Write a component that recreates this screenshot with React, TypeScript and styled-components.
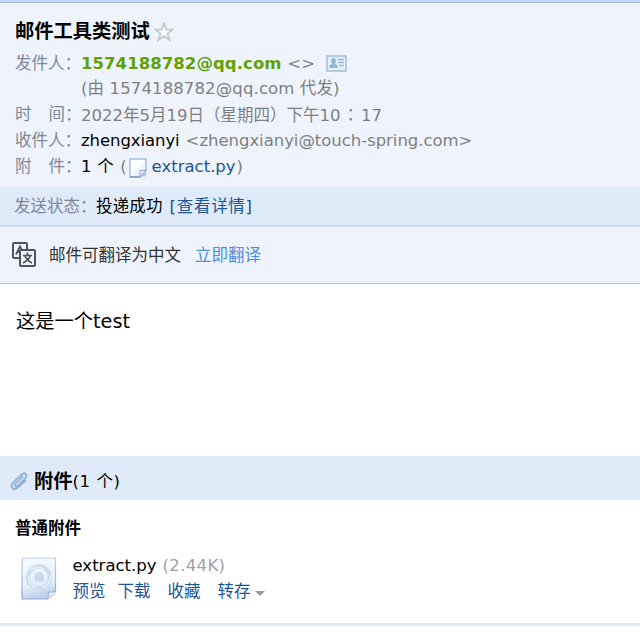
import { createGlobalStyle, styled } from "styled-components";

const actions = [
  { label: "预览", gap: 12 },
  { label: "下载", gap: 17 },
  { label: "收藏", gap: 17 },
];

export default function App() {
  return (
    <>
      <GlobalStyle />
      <Page>
        <TopEdge />
        <MailHeader>
          <TitleRow>
            <Title>邮件工具类测试</Title>
            <StarIcon />
          </TitleRow>
          <Row>
            <Label>发件人：</Label>
            <Sender>1574188782@qq.com</Sender>
            <Muted $left={6}>&lt;&gt;</Muted>
            <CardIcon />
          </Row>
          <Row $height={24}>
            <Label />
            <Muted $spacing={0.12}>(由 1574188782@qq.com 代发)</Muted>
          </Row>
          <Row $height={28}>
            <Label>
              时<Wide />间：
            </Label>
            <Muted>
              2022年5月19日（星期四）下午10<Colon>：</Colon>17
            </Muted>
          </Row>
          <Row $height={24}>
            <Label>收件人：</Label>
            <Text $spacing={-0.08}>zhengxianyi</Text>
            <Muted $left={6} $spacing={-0.04}>
              &lt;zhengxianyi@touch-spring.com&gt;
            </Muted>
          </Row>
          <Row $height={28}>
            <Label>
              附<Wide />件：
            </Label>
            <Text $spacing={0.3}>1 个</Text>
            <Muted $left={6}>(</Muted>
            <NoteIcon />
            <Link>extract.py</Link>
            <Muted $left={1}>)</Muted>
          </Row>
        </MailHeader>
        <StatusBar>
          <Label $width={82}>发送状态：</Label>
          <Text $spacing={0.15}>投递成功</Text>
          <DetailLink>[查看详情]</DetailLink>
        </StatusBar>
        <TranslateBar>
          <TranslateIcon />
          <Text $color="#333">邮件可翻译为中文</Text>
          <TranslateLink>立即翻译</TranslateLink>
        </TranslateBar>
        <MailBody>这是一个test</MailBody>
        <AttachmentBar>
          <ClipIcon />
          <Title>附件</Title>
          <Text $spacing={0.6}>(1 个)</Text>
        </AttachmentBar>
        <AttachmentPanel>
          <GroupName>普通附件</GroupName>
          <FileItem>
            <FileIcon />
            <FileInfo>
              <FileLine>
                <Text>extract.py</Text>
                <FileSize>(2.44K)</FileSize>
              </FileLine>
              <FileLine>
                {actions.map(({ label, gap }) => (
                  <Action key={label} $gap={gap}>
                    {label}
                  </Action>
                ))}
                <Action $gap={4}>转存</Action>
                <Caret />
              </FileLine>
            </FileInfo>
          </FileItem>
        </AttachmentPanel>
      </Page>
    </>
  );
}

function StarIcon() {
  return (
    <svg width="20" height="20" viewBox="0 0 20 20">
      <path
        d="M10 1.2 12.2 7.6H18.8L13.5 11.5 15.5 18 10 14.1 4.5 18 6.5 11.5 1.2 7.6H7.8Z"
        fill="#fbfcfd"
        stroke="#c6c8ca"
        strokeWidth="1.7"
      />
    </svg>
  );
}

function CardIcon() {
  return (
    <CardSvg width="21" height="17" viewBox="0 0 21 17">
      <rect x="1" y="1" width="19" height="15" fill="#e5f0fa" stroke="#a6c1da" strokeWidth="1.6" />
      <path
        d="M7.5 3C9.2 3 9.8 4 9.8 5.5S9 8.2 9 9l2.5 1.2V13h-8v-2.8L6 9c0-.8-.9-2-.9-3.5S5.8 3 7.5 3Z"
        fill="#94b5d3"
      />
      <path d="M12 4.5h6M12 7.5h6M13 10.5h5" stroke="#9cbbd7" strokeWidth="1.3" />
    </CardSvg>
  );
}

function NoteIcon() {
  return (
    <NoteSvg width="18" height="20" viewBox="0 0 18 20">
      <defs>
        <linearGradient id="note" x1="0" y1="0" x2="1" y2="1">
          <stop offset="0.4" stopColor="#fff" />
          <stop offset="1" stopColor="#cbdcf2" />
        </linearGradient>
      </defs>
      <path d="M1 1H17V12L11 19H1Z" fill="url(#note)" stroke="#a9bedd" strokeWidth="1.5" />
      <path d="M1 19H11L17 12" fill="none" stroke="#7f9ccb" strokeWidth="1.5" />
      <path d="M11 18.5V12.5H17V18.5Z" fill="#b3c7e5" />
      <path d="M11 18.5V12.5H17Z" fill="#edf4fc" stroke="#8fa9d2" />
    </NoteSvg>
  );
}

function TranslateIcon() {
  return (
    <TranslateSvg width="24" height="25" viewBox="0 0 24 25" fill="none" stroke="#50545a">
      <path d="M7 16H2Q1 16 1 15V2Q1 1 2 1H14Q15 1 15 2V7" strokeWidth="2" />
      <path d="M4 12.5 8 4.5 10 8M5.7 9.8H8" strokeWidth="1.8" />
      <rect x="8" y="8" width="15" height="16" rx="1" strokeWidth="2" />
      <path
        d="M15.5 10.5V13M11 13.5H20M18.5 13.5Q17 18 11 21M12.7 13.5Q14.5 18 20 21"
        strokeWidth="1.7"
      />
    </TranslateSvg>
  );
}

function ClipIcon() {
  return (
    <ClipSvg width="19" height="19" viewBox="0 0 19 19" fill="none" strokeLinecap="round">
      <path
        d="M12.5 4.5 5.5 11.5C3.5 13.8 5.5 15.7 7.6 13.7L15.3 6C18.5 2.6 14.5-.4 11.5 2.6L3.3 10.5C-.7 14.7 3.5 19.5 7.9 15.5L15.5 8.5"
        stroke="#8eb0d1"
        strokeWidth="1.8"
      />
      <path d="M14.5 6 7.8 12.8M12 3.5 4 11.3" stroke="#d2e3f3" strokeWidth="0.7" />
    </ClipSvg>
  );
}

function FileIcon() {
  return (
    <FileSvg width="36" height="43" viewBox="0 0 36 43">
      <defs>
        <linearGradient id="page" x1="0" y1="0" x2="0.2" y2="1">
          <stop offset="0" stopColor="#f5faff" />
          <stop offset="0.7" stopColor="#e6f0fb" />
          <stop offset="1" stopColor="#bed1ea" />
        </linearGradient>
        <linearGradient id="edge" x1="0" y1="0" x2="0" y2="1">
          <stop offset="0" stopColor="#bfd3eb" />
          <stop offset="1" stopColor="#8da9d3" />
        </linearGradient>
      </defs>
      <path d="M1 1H34.5V34L26 42H1Z" fill="url(#page)" stroke="url(#edge)" strokeWidth="1.2" />
      <circle cx="18" cy="20.5" r="11" fill="none" stroke="#cfddee" strokeWidth="4.5" />
      <path
        d="M8 14Q14 8.5 23 12M30 18Q29.5 27 22.5 30.5M15 31Q8 27.5 7.5 19"
        fill="none"
        stroke="#e6f0fa"
        strokeWidth="1.6"
      />
      <path d="M13.5 24.5V19.5A4.6 4.6 0 0 1 22.7 19.5V24.5Z" fill="#c8d9ed" />
      <path d="M26 42Q28.5 39 27.5 35 31 36 35 33.5 33 39 26 42Z" fill="#e9f2fb" stroke="#9ab3d8" />
    </FileSvg>
  );
}

const GlobalStyle = createGlobalStyle`
  body {
    margin: 0;
    background: #fff;
    color: #000;
    font: 16.5px/26px "DejaVu Sans", "Noto Sans CJK SC", sans-serif;
  }
  svg {
    flex: none;
    display: block;
  }
`;

const Page = styled.main`
  width: 640px;
  height: 634px;
  overflow: hidden;
  white-space: nowrap;
`;

const TopEdge = styled.div`
  height: 2px;
  background: #c1d9f3;
  border-bottom: 1px solid #a4bddc;
`;

const MailHeader = styled.header`
  box-sizing: border-box;
  height: 184px;
  padding: 15px 15px 0;
  background: #eff4fc;
`;

const TitleRow = styled.div`
  display: flex;
  align-items: center;
  gap: 4px;
  height: 28px;
  margin-bottom: 5px;
`;

const Title = styled.span`
  font-size: 19.25px;
  font-weight: bold;
`;

const Row = styled.div<{ $height?: number }>`
  display: flex;
  align-items: center;
  height: ${({ $height }) => $height ?? 26}px;
`;

const Label = styled.span<{ $width?: number }>`
  flex: none;
  width: ${({ $width }) => $width ?? 66}px;
  color: #7d8799;
`;

const Wide = styled.span`
  display: inline-block;
  width: 17px;
`;

const Text = styled.span<{ $color?: string; $spacing?: number }>`
  color: ${({ $color }) => $color ?? "#000"};
  letter-spacing: ${({ $spacing }) => $spacing ?? 0}px;
`;

const Sender = styled.span`
  color: #5fa207;
  font-weight: bold;
  letter-spacing: 0.06px;
`;

const Muted = styled.span<{ $left?: number; $spacing?: number }>`
  margin-left: ${({ $left }) => $left ?? 0}px;
  color: #7f7f80;
  letter-spacing: ${({ $spacing }) => $spacing ?? 0}px;
`;

const Colon = styled.span`
  font-family: "Noto Sans CJK TC", sans-serif;
  margin: 0 2px;
`;

const Link = styled.span`
  color: #1e5494;
`;

const DetailLink = styled(Link)`
  margin-left: 7px;
  letter-spacing: 0.7px;
`;

const StatusBar = styled.div`
  box-sizing: border-box;
  display: flex;
  align-items: center;
  height: 40px;
  padding: 1px 14px 0;
  background: #e0ebf9;
  border-bottom: 2px solid #d0d9e5;
`;

const TranslateBar = styled.div`
  box-sizing: border-box;
  display: flex;
  align-items: center;
  height: 57px;
  padding: 1px 12px 0;
  background: #eff4fc;
  border-bottom: 1px solid #aec3de;
`;

const TranslateLink = styled.span`
  margin-left: 14px;
  color: #4a8cec;
`;

const MailBody = styled.article`
  box-sizing: border-box;
  height: 172px;
  padding: 25px 16px;
  font-size: 19.25px;
`;

const AttachmentBar = styled.div`
  box-sizing: border-box;
  display: flex;
  align-items: center;
  height: 44px;
  padding: 7px 10px 0;
  background: #e0ebf9;
`;

const AttachmentPanel = styled.section`
  box-sizing: border-box;
  height: 126px;
  padding: 16px 15px 0;
  border-bottom: 3px solid #e0ebf9;
`;

const GroupName = styled.div`
  font-weight: bold;
`;

const FileItem = styled.div`
  display: flex;
  align-items: flex-start;
  margin: 11px 0 0 6px;
`;

const FileInfo = styled.div`
  margin-left: 15.5px;
`;

const FileLine = styled.div`
  display: flex;
  align-items: center;
  height: 26px;
`;

const FileSize = styled.span`
  margin-left: 6px;
  color: #a0a0a0;
  letter-spacing: 0.35px;
`;

const Action = styled(Link)<{ $gap: number }>`
  margin-right: ${({ $gap }) => $gap}px;
`;

const Caret = styled.i`
  border: 5px solid transparent;
  border-top-color: #999;
  border-bottom: 0;
  margin-top: 3px;
`;

const CardSvg = styled.svg`
  margin: -1px 0 0 11px;
`;

const NoteSvg = styled.svg`
  margin: 2px 5px 0 2px;
`;

const TranslateSvg = styled.svg`
  margin: -3px 13px 0 0;
`;

const ClipSvg = styled.svg`
  margin: 0 5px 0 0;
`;

const FileSvg = styled.svg`
  margin-top: 4px;
`;
